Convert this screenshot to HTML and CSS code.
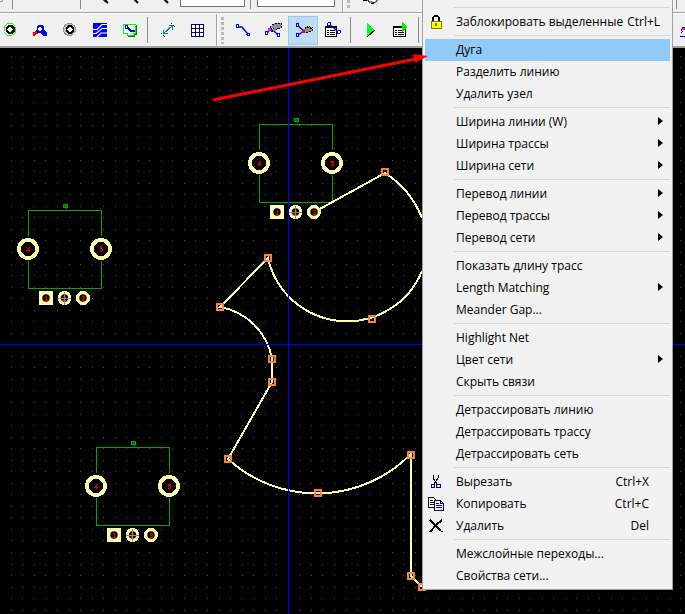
FILE: index.html
```html
<!DOCTYPE html>
<html lang="ru">
<head>
<meta charset="utf-8">
<title>PCB</title>
<link rel="stylesheet" href="styles.css">
</head>
<body>
<div class="app">
  <header class="bars">
    <div class="bar bar-top">
      <svg class="peek" width="180" height="12" aria-hidden="true">
        <path d="M0 1.500h2.500V-1" fill="none" stroke="#a0a0a0"/>
        <path d="M12.500 0v9M80.500 0v9" stroke="#8c8c8c"/>
        <path d="M104 -1l4 4M134 -1l4 4M164 -1l4 4" stroke="#000" stroke-width="2"/>
        <path d="M103 0l3 3" stroke="#008080"/>
      </svg>
      <input class="field field-a" aria-label="A">
      <span class="rule"></span>
      <input class="field field-b" aria-label="B">
      <span class="edge"></span>
      <span class="grip"></span>
      <svg class="hand" width="20" height="12" aria-hidden="true"><path d="M1 0h5l1 2h3l2 1 3-2V-1" fill="#fff" stroke="#000" stroke-width="1"/><path d="M1 .5h4M9 3.500h3" stroke="#000"/></svg>
      <span class="rule rule-far"></span>
    </div>
    <div class="bar bar-main">
      <button class="tool first" type="button"><svg viewBox="0 0 20 20"><path d="M7.500 3.500h5l3 3v6l-3 3h-5l-3-3v-6z" fill="#fff" stroke="#0f0" stroke-dasharray="9 1"/><path d="M8 5h4l2.500 2.500v4L12 14H8l-2.500-2.500v-4z"/><path d="M10 6.500l3 3-3 3-3-3z" fill="#fff"/></svg></button>
      <button class="tool" type="button"><svg viewBox="0 0 20 20"><path d="M3 12l4-1 2 2-3 1-1 2H3z" fill="red"/><path d="M8 5h4l2 2v3l3 3v3h-4l-3-3H7l-2-2 2-2V7z" fill="#00f"/><path d="M10 6.500l2 2.500-2 3-2-3z" fill="#fff"/></svg></button>
      <button class="tool" type="button"><svg viewBox="0 0 20 20"><circle cx="9.500" cy="9.500" r="6" fill="#c0c0c0" stroke="#909090"/><path d="M8 5h3l2.500 2.500v4L11 14H8l-2.500-2.500v-4z"/><path d="M9.500 6.500l3 3-3 3-3-3z" fill="#fff"/></svg></button>
      <button class="tool" type="button"><svg viewBox="0 0 20 20"><path d="M3 3h14v14H3z" fill="#00f"/><path d="M3 9.500h4l5-5h5M3 13.500h3l6-5h5M7 17l4-4h6" fill="none" stroke="#fff" shape-rendering="auto" stroke-width="1.200"/></svg></button>
      <button class="tool" type="button"><svg viewBox="0 0 20 20"><path d="M16.500 5v9.500h-2v2h-7" fill="none" stroke="#008000"/><path d="M3.500 4.500h12v9h-2v2h-6v-2h-4z" fill="#fff" stroke="#0f0" stroke-width="1"/><path d="M7 7l4 4h4" fill="none" stroke="#00f" stroke-width="2"/><circle cx="6.500" cy="7" r="1.500" fill="#fff" stroke="#00f"/></svg></button>
      <span class="rule"></span>
      <button class="tool" type="button"><svg viewBox="0 0 20 20"><path d="M5 14L15 5M5.500 10v3.500h4M11 5.500h3.500v4" fill="none" stroke="#008080"/><path d="M3 13l4 4M13 3l4 4" stroke="#000" stroke-dasharray="2 1"/></svg></button>
      <button class="tool" type="button"><svg viewBox="0 0 20 20"><path d="M4 4h12v13H4z" fill="#fff"/><path d="M3.500 4.500h12v12h-12zM3.500 8.500h12M3.500 12.500h12M7.500 4v12M11.500 4v12" fill="none" stroke="#000080"/></svg></button>
      <span class="edge"></span>
      <span class="grip"></span>
      <button class="tool" type="button"><svg viewBox="0 0 20 20"><path d="M5 7h4l4 5 2 2" fill="none" stroke="#00f" shape-rendering="auto" stroke-width="1.500"/><g fill="#fff" stroke="#00f"><circle cx="4.500" cy="6" r="1.500"/><circle cx="15.500" cy="14.500" r="1.500"/></g></svg></button>
      <button class="tool" type="button"><svg viewBox="0 0 20 20"><path d="M4 13l3-4 4 2 4 4" fill="none" stroke="#00f" stroke-width="1.500" shape-rendering="auto"/><path d="M5 8h3v3H5z" fill="#f0f"/><path d="M7 7l5-4h6v5h-3l-3 3H9l2-3H8z" fill="#909090" stroke="#000" stroke-dasharray="2 1"/><g fill="#fff" stroke="#00f"><circle cx="3.500" cy="13" r="1.500"/><circle cx="15.500" cy="15" r="1.500"/></g></svg></button>
      <button class="tool active" type="button"><svg viewBox="0 0 20 20"><path d="M5 6l6 5-6 4" fill="none" stroke="#00f" stroke-width="1.500" shape-rendering="auto"/><path d="M10 11l4-5 1 2 2-2v3l2-1v3l-3 1-3 1z" fill="#909090" stroke="#000" stroke-dasharray="2 1"/><path d="M9 10h3v3H9z" fill="red"/><g fill="#cfe6f8" stroke="#00f"><circle cx="4.500" cy="5" r="1.500"/><circle cx="4.500" cy="15" r="1.500"/></g></svg></button>
      <button class="tool" type="button"><svg viewBox="0 0 20 20"><path d="M2.500 6.500h11v10h-11z" fill="#fff" stroke="#000"/><path d="M2 6h12v2H2z"/><path d="M4 10.500h2M7 10.500h5M4 12.500h2M7 12.500h5M4 14.500h2M7 14.500h5" stroke="#000"/><path d="M6 4l5 4 4 4" fill="none" stroke="#00f" stroke-width="1.500" shape-rendering="auto"/><g fill="#fff" stroke="#00f"><circle cx="6" cy="4" r="1.500"/><circle cx="16" cy="12" r="1.500"/></g></svg></button>
      <span class="rule"></span>
      <button class="tool" type="button"><svg viewBox="0 0 20 20"><path d="M6 3l8 7-8 7z" fill="#0f3"/><path d="M14 10l-8 7" stroke="#000"/></svg></button>
      <button class="tool" type="button"><svg viewBox="0 0 20 20"><path d="M2.500 6.500h12v10h-12z" fill="#fff" stroke="#000"/><path d="M2 6h13v2H2z"/><path d="M4 10.500h2M7 10.500h6M4 12.500h2M7 12.500h6M4 14.500h2M7 14.500h6" stroke="#000"/><path d="M11 2l6 5-6 5z" fill="#0e0"/></svg></button>
      <span class="rule"></span>
      <button class="tool last" type="button"><svg viewBox="0 0 20 20"><path d="M1 11l2-4h4" fill="none" stroke="#000"/><path d="M2 8h3v2H2z" fill="#f0f"/><path d="M0 16.500h8M1 13l2-2" stroke="#00f"/></svg></button>
    </div>
  </header>

  <main class="board">
    <svg class="drawing" width="100%" height="100%">
      <defs>
        <g id="part">
          <path d="M.5 26V.5h73V26M.5 51v27.500h73V51" fill="none" stroke="#00a800"/>
          <g fill="#000" stroke="#ffffb0" stroke-width="4"><circle cx="0" cy="39" r="9"/><circle cx="73" cy="39" r="9"/></g>
          <path d="M11 81h14v14H11z" fill="#ffffb0"/>
          <circle cx="36.500" cy="88" r="7" fill="#ffffb0"/><circle cx="55" cy="88" r="7" fill="#ffffb0"/>
          <g shape-rendering="auto"><circle cx="18" cy="88" r="3.700"/><circle cx="36.500" cy="88" r="3.700"/><circle cx="55" cy="88" r="3.700"/></g>
          <path d="M35 -5.500h4v3h-4zM38.500 -3v2" fill="#007000" stroke="#00a800"/>
          <g class="pin"><text x="0" y="42">4</text><text x="73" y="42">5</text><text x="18" y="91">1</text><text x="36" y="91">2</text><text x="55" y="91">3</text></g>
          <path d="M30 88.500h13M36.500 82v13" stroke="#888"/>
        </g>
        <path id="node" d="M-3 -3h6v6h-6z" fill="none" stroke="#ff7f3f" stroke-width="2"/>
      </defs>
      <g transform="translate(0 -48)" shape-rendering="crispEdges">
        <path id="dots" stroke="#585858"/>
        <use href="#part" x="259" y="124"/>
        <use href="#part" x="28" y="210"/>
        <use href="#part" x="96" y="447"/>
        <path d="M318 210L385 173A95 95 0 0 1 422 218M422 271A81 81 0 0 1 268 258L220 307A64 64 0 0 1 272 359V382L228 459A132 132 0 0 0 411 454V576L422 587" fill="none" stroke="#ffffb0" stroke-width="2"/>
        <path d="M288.500 48v2000M0 344.500h4000" stroke="#00f"/>
        <use href="#node" x="385" y="172"/><use href="#node" x="268" y="258"/><use href="#node" x="220" y="307"/>
        <use href="#node" x="372" y="319"/><use href="#node" x="272" y="359"/><use href="#node" x="272" y="382"/>
        <use href="#node" x="228" y="459"/><use href="#node" x="318" y="493"/><use href="#node" x="411" y="455"/>
        <use href="#node" x="411" y="576"/><use href="#node" x="422" y="587"/>
      </g>
    </svg>
  </main>

  <nav class="menu">
    <div class="group"><button class="item" type="button"><svg class="icon" viewBox="0 0 16 16"><path d="M5 7V3.500L6.500 2h3L11 3.500V7" fill="none" stroke="#000" stroke-width="2"/><path d="M3 7h10v7H3z" fill="#ff0" stroke="#808000"/><path d="M7 9h2v3H7z" fill="#808000"/></svg><span>Заблокировать выделенные</span><kbd>Ctrl+L</kbd></button></div>
    <div class="group">
      <button class="item selected" type="button">Дуга</button>
      <button class="item" type="button">Разделить линию</button>
      <button class="item" type="button">Удалить узел</button>
    </div>
    <div class="group">
      <button class="item sub" type="button">Ширина линии (W)</button>
      <button class="item sub" type="button">Ширина трассы</button>
      <button class="item sub" type="button">Ширина сети</button>
    </div>
    <div class="group">
      <button class="item sub" type="button">Перевод линии</button>
      <button class="item sub" type="button">Перевод трассы</button>
      <button class="item sub" type="button">Перевод сети</button>
    </div>
    <div class="group">
      <button class="item" type="button">Показать длину трасс</button>
      <button class="item sub" type="button">Length Matching</button>
      <button class="item" type="button">Meander Gap...</button>
    </div>
    <div class="group">
      <button class="item" type="button">Highlight Net</button>
      <button class="item sub" type="button">Цвет сети</button>
      <button class="item" type="button">Скрыть связи</button>
    </div>
    <div class="group">
      <button class="item" type="button">Детрассировать линию</button>
      <button class="item" type="button">Детрассировать трассу</button>
      <button class="item" type="button">Детрассировать сеть</button>
    </div>
    <div class="group">
      <button class="item" type="button"><svg class="icon" viewBox="0 0 16 16"><path d="M5 1v3l4 6M10 1v3l-4 6" fill="none" stroke="#000"/><g fill="none" stroke="#000080"><circle cx="5" cy="12" r="2"/><circle cx="10.500" cy="12" r="2"/></g></svg><span>Вырезать</span><kbd>Ctrl+X</kbd></button>
      <button class="item" type="button"><svg class="icon" viewBox="0 0 16 16"><path d="M.5 1.500h5l2 2v8h-7z" fill="#fff" stroke="#000"/><path d="M2 4.500h3M2 6.500h4M2 8.500h4" stroke="#000"/><path d="M6.500 4.500h6l3 3v7h-9z" fill="#fff" stroke="#000080"/><path d="M8 7.500h3M8 9.500h6M8 11.500h6M12.500 4v3.500H15" fill="none" stroke="#000080"/></svg><span>Копировать</span><kbd>Ctrl+C</kbd></button>
      <button class="item" type="button"><svg class="icon" viewBox="0 0 16 16"><path d="M2 2l11 11" stroke="#000" stroke-width="2"/><path d="M14 2L8 7l-6 7" fill="none" stroke="#000" stroke-width="2"/><path d="M13 13l2 1" stroke="#000"/></svg><span>Удалить</span><kbd>Del</kbd></button>
    </div>
    <div class="group">
      <button class="item" type="button">Межслойные переходы...</button>
      <button class="item" type="button">Свойства сети...</button>
    </div>
  </nav>

  <svg class="arrow" width="220" height="60" aria-hidden="true"><path d="M3 50L206 9" stroke="red" stroke-width="3"/><path d="M218 6L203 4l2 9z" fill="red"/></svg>
</div>
<script src="grid.js"></script>
</body>
</html>
```

FILE: styles.css
```css
* { box-sizing: border-box; }
body { margin: 0; background: #000; font: 12px/22px "Open Sans", "Noto Sans", sans-serif; color: #000; }
button { border: 0; padding: 0; background: none; font: inherit; color: inherit; }
.app { position: relative; height: 100vh; display: flex; flex-direction: column; overflow: hidden; }
.bars { background: #f0f0f0; border-bottom: 2px solid #a0a0a0; }
.bar { display: flex; overflow: hidden; }
.bar-top { height: 13px; border-bottom: 1px solid #a0a0a0; }
.bar-main { height: 33px; border-top: 1px solid #fff; align-items: center; }
.bar > * { flex: none; }
.field { height: 7px; border: 1px solid #707070; border-top: 0; padding: 0; background: #fff; }
.field-a { width: 65px; }
.field-b { width: 78px; }
.bar .rule { width: 1px; height: 26px; margin: 0 5px 0 2px; background: #8c8c8c; }
.bar-top .rule { height: 9px; margin: 0 6px 0 5px; }
.bar-top .rule-far { margin-left: 294px; }
.edge { width: 2px; height: 33px; margin: 0 3px; background: #a0a0a0; border-right: 1px solid #fff; }
.bar-top .edge { margin-left: 7px; }
.grip { width: 3px; height: 27px; margin-right: 4px; background: repeating-linear-gradient(#b8b8b8 0 3px, #f0f0f0 3px 5px); }
.bar-top .grip { height: 9px; }
.hand { margin-left: 8px; }
.tool { width: 30px; height: 29px; display: grid; place-items: center; }
.tool svg { width: 20px; height: 20px; shape-rendering: crispEdges; }
.tool.first { margin-left: -5px; }
.tool.active { background: #c0dcf3; border: 1px solid #90c8f6; }
.tool.last { margin-left: 251px; }
.board { flex: 1; min-height: 0; background: #000; }
.drawing { display: block; }
.pin { fill: red; font: bold 7px "Liberation Sans", sans-serif; text-anchor: middle; }
.menu { position: absolute; top: 0; left: 422px; width: 251px; padding: 5px 2px 2px; background: #f1f1f1; border: 1px solid #a0a0a0; border-top: 0; }
.group { padding-top: 6px; background: linear-gradient(#d7d7d7, #d7d7d7) 29px 2px / 216px 1px no-repeat; }
.item { position: relative; display: flex; gap: 4px; width: 100%; height: 22px; padding: 0 21px 0 31px; text-align: left; line-height: 22px; white-space: nowrap; }
.item kbd { margin-left: auto; font: inherit; }
.selected { background: #91c9f7; }
.icon { position: absolute; left: 3px; top: 3px; width: 16px; height: 16px; shape-rendering: crispEdges; }
.sub::after { content: ""; margin: 6px -14px 0 auto; width: 0; height: 0; border: 4px solid transparent; border-left: 5px solid #000; border-right: 0; }
.arrow { position: absolute; left: 210px; top: 50px; pointer-events: none; }
```

FILE: grid.js
```js
// Grid dots radiate from the board origin, snapped to whole pixels.
const step = 11.54;
let d = "";
for (let i = -25; i <= 60; i++) {
  for (let j = -25; j <= 60; j++) {
    d += `M${Math.floor(288.3 + i * step)} ${Math.floor(344.8 + j * step) + 0.5}h1`;
  }
}
document.getElementById("dots").setAttribute("d", d);
```
